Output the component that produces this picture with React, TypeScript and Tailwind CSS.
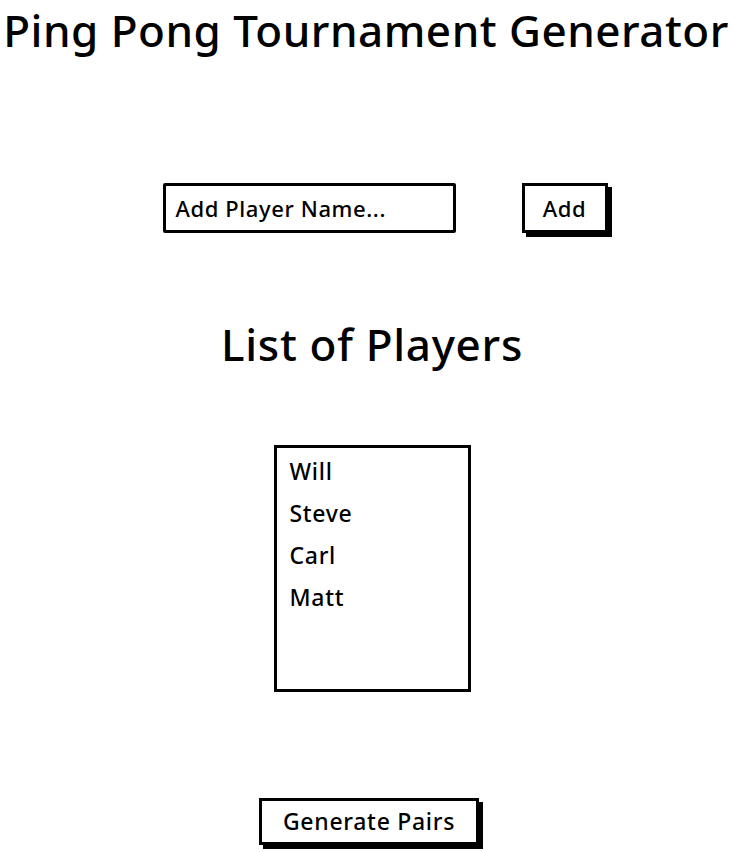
const players = ["Will", "Steve", "Carl", "Matt"]

export default function App() {
    return (
        <div
            className="flex min-h-[852px] w-[744px] flex-col items-center bg-white text-black"
            style={{ fontFamily: "'Noto Sans', 'Open Sans', sans-serif" }}
        >
            {/* Title */}
            <h1 className="mt-[2px] mr-[12px] whitespace-nowrap text-[44px] leading-[56px] font-medium tracking-[0.5px]">
                Ping Pong Tournament Generator
            </h1>

            {/* Add player row */}
            <div className="mt-[125px] flex items-start gap-[66px] pl-[26px]">
                <div className="flex h-[50px] w-[293px] items-center rounded-[2px] border-[3px] border-black px-[10px] text-[22px] font-medium tracking-[0.6px]">
                    Add Player Name...
                </div>
                <button className="flex h-[50px] w-[86px] items-center justify-center border-[3px] border-black text-[22px] font-medium tracking-[0.6px] shadow-[4px_4px_0_0_#000]">
                    Add
                </button>
            </div>

            {/* Players */}
            <h2 className="mt-[86px] text-[44px] leading-[50px] font-medium tracking-[0.7px]">List of Players</h2>

            <ul className="mt-[76px] flex h-[247px] w-[197px] flex-col border-[3px] border-black px-[13px] pt-[5px] text-[23px] font-medium tracking-[0.7px]">
                {players.map((p) => (
                    <li key={p} className="h-[42px] leading-[36px]">
                        {p}
                    </li>
                ))}
            </ul>

            <button className="mt-[106px] mr-[6px] flex h-[47px] w-[220px] items-center justify-center border-[3px] border-black text-[23px] font-medium tracking-[0.7px] shadow-[4px_4px_0_0_#000]">
                Generate Pairs
            </button>
        </div>
    )
}
